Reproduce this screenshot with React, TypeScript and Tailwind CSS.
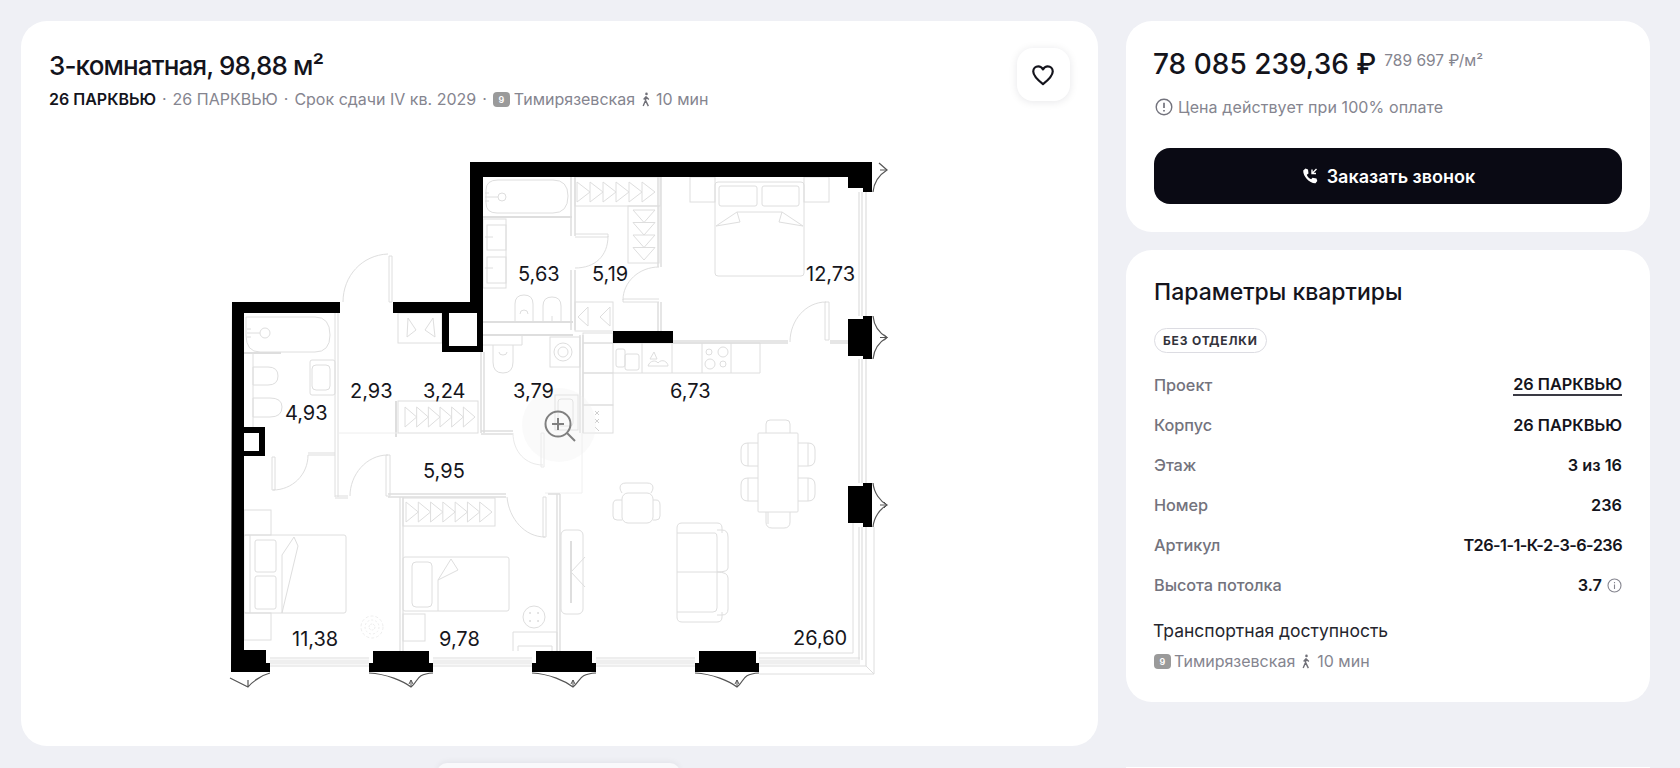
import React from "react";

const G = "#dedede";

function Hangers({ x, y, n, w, h, dir = "h" }: { x: number; y: number; n: number; w: number; h: number; dir?: "h" | "v" }) {
  const out: React.ReactNode[] = [];
  for (let i = 0; i < n; i++) {
    if (dir === "h") {
      const s = w / n;
      const X = x + i * s;
      out.push(<path key={i} d={`M${X} ${y}V${y + h}L${X + s} ${y + h / 2}Z`} />);
    } else {
      const s = h / n;
      const Y = y + i * s;
      out.push(<path key={i} d={`M${x} ${Y}H${x + w}L${x + w / 2} ${Y + s}Z`} />);
    }
  }
  return <g>{out}</g>;
}

function Pillar({ x1, x2, x3, x4, tip }: { x1: number; x2: number; x3: number; x4: number; tip: number }) {
  return (
    <g>
      <path d={`M${x2} 651H${x3}V663H${x4}V672H${x1}V663H${x2}Z`} fill="#000" />
      <path d={`M${x1} 673C${x1 + 18} 674 ${tip - 8} 681 ${tip} 687C${tip + 8} 681 ${x4 - 18} 674 ${x4} 673`} fill="none" stroke="#555" strokeWidth="1.2" />
      <path d={`M${tip} 687V680M${tip - 2} 684L${tip} 680L${tip + 2} 684`} fill="none" stroke="#555" strokeWidth="1" />
    </g>
  );
}

function SideSwing({ y1, y2 }: { y1: number; y2: number }) {
  const m = (y1 + y2) / 2;
  return (
    <g fill="none" stroke="#555" strokeWidth="1.2">
      <path d={`M873 ${y1}C874 ${y1 + 10} 880 ${m - 4} 887 ${m}C880 ${m + 4} 874 ${y2 - 10} 873 ${y2}`} />
      <path d={`M887 ${m}H880M884 ${m - 3}L887 ${m}L884 ${m + 3}`} strokeWidth="1" />
    </g>
  );
}

function Plan() {
  const labels: [string, number, number][] = [
    ["4,93", 285, 420],
    ["2,93", 350, 398],
    ["3,24", 423, 398],
    ["3,79", 513, 398],
    ["5,63", 518, 281],
    ["5,19", 592, 281],
    ["12,73", 806, 281],
    ["6,73", 670, 398],
    ["5,95", 423, 478],
    ["11,38", 292, 646],
    ["9,78", 439, 646],
    ["26,60", 793, 645],
  ];
  return (
    <svg width="700" height="560" viewBox="215 145 700 560" className="block">
      <g fill="none" stroke={G} strokeWidth="1">
        {/* upper bath */}
        <path d="M486 190Q486 180 498 180H553Q568 180 568 196Q568 213 553 213H497Q486 213 486 203Z" />
        <circle cx="502" cy="197" r="4" />
        <path d="M485 197H498M485 193H489M485 201H489" />
        <path d="M483 217H572" strokeWidth="2" />
        <rect x="483" y="219" width="23" height="69" />
        <rect x="487" y="225" width="19" height="25" />
        <rect x="487" y="257" width="19" height="26" />
        <path d="M485 237H493M485 268H493" />
        <path d="M515 321V304Q515 295 524 295Q533 295 533 304V321M520 314A4 4 0 0 1 528 314" />
        <path d="M543 321V306Q543 297 552 297Q561 297 561 306V321M552 316V321" />
        <path d="M483 322H573M483 335H573" strokeWidth="2" />
        <path d="M484 335H522V345H483" />
        {/* upper wall lines */}
        <path d="M571 177V236M575 177V236M571 270V330M575 270V330" strokeWidth="1.5" />
        <rect x="575" y="177" width="85" height="29" />
        <Hangers x={577} y={182} n={6} w={78} h={20} />
        <rect x="628" y="206" width="31" height="57" />
        <Hangers x={633} y={210} n={4} w={22} h={50} dir="v" />
        <path d="M658 177V267M661 177V267M658 302V331M661 302V331" strokeWidth="1.5" />
        <path d="M575 234H608V237H575M608 236C608 256 595 268 575 268" />
        <path d="M659 299H623V302H659M623 300C623 282 639 267 659 267" />
        <rect x="575" y="302" width="38" height="29" />
        <path d="M588 307L578 317L588 326ZM610 307L600 317L610 326Z" />
        {/* bed NE */}
        <rect x="715" y="182" width="89" height="94" rx="3" />
        <rect x="719" y="186" width="38" height="20" rx="2" />
        <rect x="762" y="186" width="37" height="20" rx="2" />
        <rect x="690" y="177" width="25" height="25" />
        <rect x="804" y="177" width="25" height="25" />
        <path d="M737 212H782M716 226L737 212L740 222L716 226M803 226L782 212L779 222L803 226" />
        <path d="M673 341H788M673 343H788M830 341H848M830 343H848" strokeWidth="1.5" />
        <path d="M790 342C790 320 806 302 826 302" />
        <path d="M825 302H829V340H825Z" />
        {/* kitchen */}
        <path d="M583 343H760V373H583ZM613 343V373M642 343V373M672 343V373M702 343V373M731 343V373" />
        <rect x="583" y="333" width="30" height="10" />
        <rect x="583" y="373" width="30" height="32" />
        <rect x="583" y="405" width="30" height="28" />
        <path d="M595 411L599 415M599 411L595 415M595 419L599 423M599 419L595 423M595 427L599 431" stroke="#cfcfcf" />
        <rect x="550" y="337" width="30" height="30" />
        <circle cx="563" cy="352" r="9" />
        <circle cx="563" cy="352" r="5" />
        <rect x="616" y="349" width="9" height="18" rx="2" />
        <rect x="625" y="354" width="14" height="16" rx="2" />
        <path d="M648 366C650 360 656 360 658 363C662 358 668 362 668 366H648ZM654 352L650 359H657Z" />
        <circle cx="709" cy="352" r="3" />
        <circle cx="723" cy="352" r="5" />
        <circle cx="710" cy="364" r="5" />
        <circle cx="723" cy="364" r="3" />
        <path d="M580 335V433M583 335V433" strokeWidth="1.4" />
        <path d="M557 494V651M560 494V651" strokeWidth="1.4" />
        {/* wc centre */}
        <path d="M493 345V362Q493 373 503 373Q513 373 513 362V345M499 352A4 3 0 0 0 507 352" />
        <path d="M481 352V433M484 352V433M481 431H513M481 434H513" strokeWidth="1.5" />
        <rect x="555" y="395" width="23" height="35" />
        <rect x="558" y="399" width="15" height="27" rx="3" />
        <path d="M513 433C513 452 526 465 543 465" stroke="#eaeaea" />
        <path d="M541 433H544V467H541Z" stroke="#eaeaea" />
        <path d="M582 433V493H545" stroke="#f0f0f0" />
        {/* top-left storage */}
        <rect x="398" y="313" width="44" height="30" />
        <path d="M408 318L416 330L407 337ZM433 318L425 330L435 337Z" />
        <rect x="398" y="401" width="80" height="32" />
        <Hangers x={405} y={407} n={6} w={70} h={20} />
        <path d="M396 401V437" strokeWidth="2" />
        {/* entry door */}
        <path d="M389 256H392V302H389Z" />
        <path d="M343 302C343 276 362 255 388 254" />
        {/* left bath */}
        <path d="M246 317H315Q330 317 330 335Q330 352 315 352H260Q246 352 246 335Z" />
        <circle cx="265" cy="333" r="5" />
        <path d="M247 333H260M247 329H251M247 337H251" />
        <path d="M244 353H281" strokeWidth="2" />
        <path d="M253 353V427" />
        <path d="M253 367H268Q278 367 278 376Q278 385 268 385H253Z" />
        <path d="M253 398H270Q282 398 282 407Q282 417 270 417H253Z" />
        <rect x="310" y="360" width="25" height="35" rx="2" />
        <rect x="312" y="365" width="18" height="25" rx="4" />
        <path d="M335 313V497M338 313V497" strokeWidth="1" />
        <path d="M338 433H398" stroke="#eeeeee" />
        <path d="M308 453H335M308 455H335M335 496H348M335 498H348" strokeWidth="1.2" />
        <path d="M272 457H275V490H272Z" />
        <path d="M273 490C292 490 308 475 308 455" />
        <path d="M386 455H390V496H386Z" />
        <path d="M350 496C350 475 366 455 388 455" />
        <path d="M388 494H506M388 497H506M548 494H560" strokeWidth="1.5" />
        <path d="M400 497V651M403 497V651" strokeWidth="1.2" />
        {/* SW bed */}
        <rect x="244" y="535" width="102" height="78" rx="2" />
        <path d="M250 535V613" />
        <rect x="255" y="540" width="21" height="32" rx="2" />
        <rect x="255" y="576" width="21" height="33" rx="2" />
        <path d="M282 613V555L294 537L298 546Z" />
        <rect x="244" y="510" width="27" height="25" />
        <rect x="244" y="613" width="27" height="27" />
        <g strokeWidth="0.8" stroke="#e8e8e8">
          <circle cx="372" cy="627" r="11" strokeDasharray="3 2" />
          <circle cx="372" cy="627" r="7" strokeDasharray="2 2" />
          <circle cx="372" cy="627" r="3" strokeDasharray="2 1" />
        </g>
        {/* wardrobe mid */}
        <rect x="403" y="498" width="92" height="28" />
        <Hangers x={406} y={502} n={7} w={86} h={20} />
        <rect x="403" y="557" width="106" height="54" rx="2" />
        <rect x="412" y="562" width="20" height="45" rx="4" />
        <path d="M438 611V580L451 559L458 570L438 580" />
        <rect x="403" y="614" width="22" height="27" />
        <circle cx="534" cy="617" r="11" />
        <path d="M530 613h.1M538 613h.1M530 621h.1M538 621h.1" strokeWidth="2" strokeLinecap="round" />
        <path d="M513 651V632H557V651M518 651V646H552V651" />
        {/* SE door */}
        <path d="M507 497C509 519 525 537 545 537" />
        <path d="M543 497H546V537H543Z" />
        {/* glazing */}
        <path d="M859 192V316M866 192V316M862 192V316M859 359V483M866 359V483M862 359V483M859 527V660M866 527V666M862 527V660" strokeWidth="1.2" />
        <path d="M270 658H369M270 666H369M433 658H532M433 666H532M596 658H695M596 666H695M759 658H860M759 666H866" strokeWidth="1.2" />
        <path d="M270 662H369M433 662H532M596 662H695M759 662H860" stroke="#efefef" strokeWidth="5" />
        <path d="M853 523V653H759M874 527V674H759M866 666L874 674" />
        {/* dining */}
        <rect x="758" y="433" width="40" height="79" rx="1" />
        <path d="M766 433V424Q766 420 770 420H786Q790 420 790 424V433" />
        <path d="M766 512V522Q766 528 772 528H784Q790 528 790 522V512" />
        <path d="M768 512V524" />
        <path d="M758 443H748Q741 443 741 450V459Q741 466 748 466H758M798 443H808Q815 443 815 450V459Q815 466 808 466H798" />
        <path d="M758 478H748Q741 478 741 485V494Q741 501 748 501H758M798 478H808Q815 478 815 485V494Q815 501 808 501H798" />
        <path d="M748 443V466M748 478V501M808 443V466M808 478V501" />
        {/* armchair */}
        <rect x="622" y="493" width="31" height="30" rx="6" />
        <path d="M622 493Q620 490 620 488Q620 483 626 483H647Q653 483 653 488Q653 490 651 493" />
        <path d="M622 500H617Q613 500 613 505V516Q613 520 617 520H622M653 500H656Q660 500 660 505V516Q660 520 656 520H653" />
        {/* sofa */}
        <path d="M677 533V528Q677 523 682 523H717Q722 523 722 528V533M677 612V617Q677 622 682 622H717Q722 622 722 617V612" />
        <path d="M677 533H715Q717 533 717 537V608Q717 612 713 612H677Z" />
        <path d="M677 572H717" />
        <path d="M717 530H722Q728 530 728 537V568Q728 572 717 572M717 572Q728 572 728 578V609Q728 615 722 615H717" />
        {/* tv */}
        <rect x="561" y="530" width="22" height="84" rx="5" />
        <path d="M571 541V603" strokeWidth="2" />
        <path d="M585 557L571 572L585 587" />
      </g>

      {/* walls */}
      <path
        d="M470 162H872V192H863V188H848V177H483V352H442V313H393V302H470ZM449 313V346H477V313Z"
        fill="#000"
        fillRule="evenodd"
      />
      <path
        d="M232 302H340V313H244V427H265V456H244V650H266V663H270V672H231ZM244 433V451H259V433Z"
        fill="#000"
        fillRule="evenodd"
      />
      <rect x="613" y="331" width="60" height="12" fill="#000" />
      <path d="M848 319H863V316H872V359H863V356H848Z" fill="#000" />
      <path d="M848 486H863V483H872V527H863V523H848Z" fill="#000" />
      <Pillar x1={369} x2={373} x3={429} x4={433} tip={411} />
      <Pillar x1={532} x2={536} x3={592} x4={596} tip={573} />
      <Pillar x1={695} x2={699} x3={756} x4={759} tip={737} />
      <path d="M230 678L248 687C252 682 262 675 270 673M248 687V680" fill="none" stroke="#555" strokeWidth="1.2" />
      <g fill="none" stroke="#555" strokeWidth="1.2">
        <path d="M873 192C874 182 879 175 887 170L879 163" />
        <path d="M887 170H880" strokeWidth="1" />
      </g>
      <SideSwing y1={316} y2={359} />
      <SideSwing y1={483} y2={527} />

      {/* zoom control */}
      <circle cx="559" cy="425" r="37" fill="#eeeeee" fillOpacity="0.3" />

      {labels.map(([t, x, y]) => (
        <text key={t} x={x} y={y} fontSize="20" fill="#16161c" fontFamily="Inter, sans-serif">
          {t}
        </text>
      ))}

      <circle cx="558" cy="424" r="12.5" fill="none" stroke="#808080" strokeWidth="2" />
      <path d="M567 433L575 441M552 424H564M558 418V430" fill="none" stroke="#808080" strokeWidth="2" />
    </svg>
  );
}

function Walker({ className }: { className?: string }) {
  return (
    <svg viewBox="0 0 10 16" className={className} fill="none" stroke="#707078" strokeWidth="1.5">
      <circle cx="5.5" cy="2" r="1.4" fill="#707078" stroke="none" />
      <path d="M5 4.5L4.5 9L2 15M4.5 9L7.5 15M5 5L2.5 8M5 5L8 8" />
    </svg>
  );
}

function MetroBadge() {
  return (
    <span className="flex h-[15px] w-[17px] items-center justify-center rounded-[4px] bg-[#9a9a9a] text-[9px] font-semibold leading-none text-white">
      9
    </span>
  );
}

function Row({ label, children }: { label: string; children: React.ReactNode }) {
  return (
    <div className="flex h-10 items-center justify-between">
      <span className="text-[16.3px] font-medium tracking-[-0.05px] text-[#73737d]">{label}</span>
      <span className="flex items-center gap-1.5 text-[16.3px] font-semibold text-[#14141c]">{children}</span>
    </div>
  );
}

export default function App() {
  return (
    <div
      className="relative flex h-[768px] w-[1680px] items-start gap-[28px] overflow-hidden bg-[#eff0f5] pl-[21px] pt-[21px]"
      style={{ fontFamily: "Inter, 'Noto Sans', sans-serif" }}
    >
      <section className="relative h-[725px] w-[1077px] shrink-0 rounded-[26px] bg-white pl-[28px] pt-[29px]">
        <div className="flex items-start justify-between pr-[28px]">
          <div>
            <h1 className="text-[26px] font-medium leading-[32px] tracking-[-0.85px] text-[#14141c]">3-комнатная, 98,88 м²</h1>
            <div className="mt-[5px] flex items-center gap-[6px] text-[16px] leading-[24px] text-[#85858f]">
              <span className="text-[16px] font-semibold text-[#14141c]">26 ПАРКВЬЮ</span>
              <span>·</span>
              <span>26 ПАРКВЬЮ</span>
              <span>·</span>
              <span>Срок сдачи IV кв. 2029</span>
              <span>·</span>
              <MetroBadge />
              <span className="-ml-[2px]">Тимирязевская</span>
              <Walker className="h-[15px] w-[10px]" />
              <span className="-ml-[1px]">10 мин</span>
            </div>
          </div>
          <button className="mt-[-2px] flex h-[53px] w-[53px] items-center justify-center rounded-[16px] bg-white shadow-[0_1px_8px_rgba(20,20,40,0.10)]">
            <svg width="26" height="26" viewBox="0 0 24 24" fill="none" stroke="#14141c" strokeWidth="2" strokeLinejoin="round" className="-ml-[2px]">
              <path d="M12 20.5C7 16.5 3 13 3 8.8C3 6 5.1 4 7.6 4C9.4 4 11 5 12 6.8C13 5 14.6 4 16.4 4C18.9 4 21 6 21 8.8C21 13 17 16.5 12 20.5Z" />
            </svg>
          </button>
        </div>
        <div className="absolute left-[194px] top-[124px]">
          <Plan />
        </div>
      </section>

      <aside className="flex w-[524px] shrink-0 flex-col">
        <div className="h-[211px] rounded-[26px] bg-white px-[28px] pt-[25px]">
          <div className="flex items-start gap-[8px]">
            <span className="-ml-[1px] text-[28px] font-medium leading-[36px] text-[#14141c]">78 085 239,36 ₽</span>
            <span className="pt-[3px] text-[15.5px] leading-[24px] text-[#85858f]">789 697 ₽/м²</span>
          </div>
          <div className="mt-[13px] flex h-[24px] items-center gap-[5px] text-[16px] text-[#85858f]">
            <svg width="18" height="18" viewBox="0 0 18 18" fill="none" stroke="#73737d" strokeWidth="1.4" className="ml-[1px]">
              <circle cx="9" cy="9" r="7.8" />
              <path d="M9 4.8V10M9 12V13.4" strokeWidth="1.7" />
            </svg>
            <span className="tracking-[0.1px]">Цена действует при 100% оплате</span>
          </div>
          <button className="mt-[29px] flex h-[56px] w-[468px] items-center justify-center gap-[8px] rounded-[16px] bg-[#0a0a14] text-[18px] font-semibold text-white">
            <svg width="18" height="18" viewBox="0 0 18 18" fill="#fff">
              <path d="M4.5 1.5L7 2.5L7.5 6.5L5.8 7.8C6.5 10 8 11.6 10.2 12.3L11.5 10.8L15.5 11.5L16.3 14L14.5 16.2C8.5 16.5 2 9.5 2.2 3.5Z" />
              <path d="M11 2.5V6.5H15M11 6.5L15.5 2" fill="none" stroke="#fff" strokeWidth="1.4" />
            </svg>
            <span>Заказать звонок</span>
          </button>
        </div>

        <div className="mt-[18px] h-[452px] rounded-[26px] bg-white px-[28px] pt-[26px]">
          <h2 className="text-[23px] font-medium leading-[32px] text-[#14141c]">Параметры квартиры</h2>
          <div className="mt-[20px] inline-flex h-[25px] items-center rounded-full border border-[#dcdce2] px-[8px] text-[12px] font-bold tracking-[0.85px] text-[#33333b]">
            БЕЗ ОТДЕЛКИ
          </div>
          <div className="mt-[12px] flex flex-col">
            <Row label="Проект">
              <span className="border-b-2 border-[#3a3a44] leading-[20px]">26 ПАРКВЬЮ</span>
            </Row>
            <Row label="Корпус">26 ПАРКВЬЮ</Row>
            <Row label="Этаж">3 из 16</Row>
            <Row label="Номер">236</Row>
            <Row label="Артикул">
              <span className="tracking-[-0.55px]">Т26-1-1-К-2-3-6-236</span>
            </Row>
            <Row label="Высота потолка">
              3.7
              <svg width="15" height="15" viewBox="0 0 15 15" fill="none" stroke="#85858f" strokeWidth="1.1" className="-ml-[1px]">
                <circle cx="7.5" cy="7.5" r="6.5" />
                <path d="M7.5 6.5V11M7.5 4V5.2" />
              </svg>
            </Row>
          </div>
          <div className="-ml-[1px] mt-[14px] text-[17.5px] leading-[24px] text-[#26262e]">Транспортная доступность</div>
          <div className="mt-[6px] flex items-center gap-[4px] text-[16px] leading-[24px] text-[#85858f]">
            <MetroBadge />
            <span className="-ml-[1px]">Тимирязевская</span>
            <Walker className="mx-[2px] h-[15px] w-[10px]" />
            <span>10 мин</span>
          </div>
        </div>

        <div className="mt-[65px] flex h-[10px] items-start gap-[9px] bg-white pl-[300px] pt-[1px]">
          <span className="h-[2px] w-[45px] bg-[#c8c8cc]" />
          <span className="h-[2px] w-[26px] bg-[#c8c8cc]" />
          <span className="h-[2px] w-[19px] bg-[#d4d4d8]" />
          <span className="ml-[58px] h-[2px] w-[2px] bg-[#666]" />
          <span className="h-[2px] w-[2px] bg-[#666]" />
        </div>
      </aside>
      <div className="absolute left-[437px] top-[763px] h-[10px] w-[243px] rounded-t-[14px] bg-[#f9f9fb] shadow-[0_-1px_6px_rgba(20,20,40,0.06)]" />
    </div>
  );
}
